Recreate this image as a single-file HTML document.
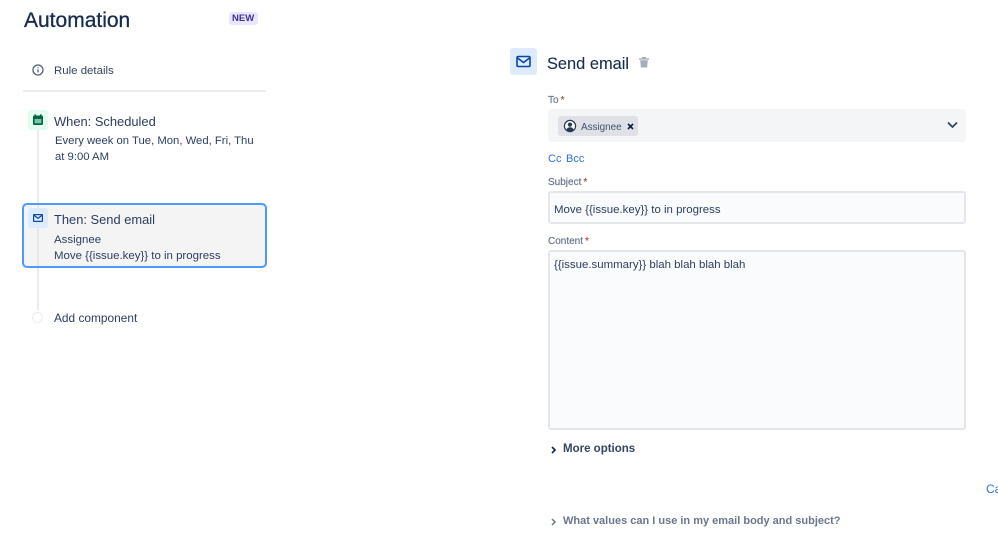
<!DOCTYPE html>
<html>
<head>
<meta charset="utf-8">
<style>
html,body{margin:0;padding:0;background:#fff}
body{width:998px;height:549px;position:relative;overflow:hidden;font-family:"Liberation Sans",sans-serif;color:#2c3e5f}
.wrap{position:absolute;left:0;top:0;width:998px;height:549px;filter:blur(.3px)}
.t{position:absolute;white-space:nowrap;line-height:16px;font-size:11.45px}
.b{position:absolute;box-sizing:border-box}
svg{position:absolute;display:block}
.req{color:#de350b;margin-left:2px}
.l{font-size:10px;color:#6b778c;-webkit-text-stroke:.2px #6b778c}
</style>
</head>
<body>
<div class="wrap">
<div class="t" style="left:24px;top:9px;line-height:24px;font-size:21px;color:#172b4d;-webkit-text-stroke:.3px #172b4d">Automation</div>
<div class="b" style="left:229px;top:12px;width:29px;height:13px;background:#eae6ff;border-radius:3px"></div>
<div class="t" style="left:232px;top:11px;font-size:9.5px;font-weight:bold;color:#403294;line-height:15px">NEW</div>

<svg style="left:31px;top:63px" width="14" height="14" viewBox="0 0 14 14" fill="none"><circle cx="7" cy="7" r="5" stroke="#505f79" stroke-width="1.3"/><path d="M7 6.4v3M7 4.2v1" stroke="#505f79" stroke-width="1.3"/></svg>
<div class="t" style="left:54px;top:63px;color:#344563;font-size:11.45px">Rule details</div>
<div class="b" style="left:23px;top:90px;width:243px;height:2px;background:#ebecf0"></div>

<div class="b" style="left:37px;top:130px;width:2px;height:180px;background:#ebecf0"></div>
<div class="b" style="left:28px;top:110px;width:20px;height:20px;background:#e3fcef;border-radius:3px"></div>
<svg style="left:32px;top:114px" width="12" height="12" viewBox="0 0 12 12"><rect x="1" y="1.5" width="10" height="9.5" rx="1.2" fill="#006644"/><rect x="2.5" y="0.3" width="1.4" height="2" fill="#006644"/><rect x="8.1" y="0.3" width="1.4" height="2" fill="#006644"/><path d="M2.6 5h6.8v4.3H2.6z" fill="#79c8a4"/></svg>
<div class="t" style="left:54px;top:114px;font-size:12.9px">When: Scheduled</div>
<div class="t" style="left:55px;top:133px;font-size:11.3px">Every week on Tue, Mon, Wed, Fri, Thu</div>
<div class="t" style="left:55px;top:149px;font-size:11.3px">at 9:00 AM</div>

<div class="b" style="left:22px;top:203px;width:245px;height:65px;background:#f4f4f4;border:2px solid #4c9aff;border-radius:5px"></div>
<div class="b" style="left:37px;top:205px;width:2px;height:61px;background:#e6e8ee"></div>
<div class="b" style="left:28px;top:208px;width:20px;height:20px;background:#deebff;border-radius:3px"></div>
<svg style="left:32px;top:212px" width="12" height="12" viewBox="0 0 12 12" fill="none"><rect x="1" y="2" width="10" height="8" rx="1" fill="#0747a6"/><rect x="2.2" y="3.2" width="7.6" height="5.6" fill="#deebff"/><path d="M2.2 3.4 6 6.4l3.8-3" stroke="#0747a6" stroke-width="1.2"/></svg>
<div class="t" style="left:54px;top:212px;font-size:12.9px">Then: Send email</div>
<div class="t" style="left:54px;top:232px">Assignee</div>
<div class="t" style="left:54px;top:248px">Move {{issue.key}} to in progress</div>

<div class="b" style="left:32px;top:312px;width:11px;height:11px;border:1.5px solid #ebecf0;border-radius:50%;background:#fff"></div>
<div class="t" style="left:54px;top:310px;font-size:11.9px">Add component</div>

<div class="b" style="left:510px;top:48px;width:27px;height:27px;background:#deebff;border-radius:3px"></div>
<svg style="left:515px;top:53px" width="17" height="17" viewBox="0 0 17 17" fill="none"><rect x="2" y="3.5" width="13" height="10" rx="1.2" stroke="#0747a6" stroke-width="1.6"/><path d="M2.5 5 8.5 9.5 14.5 5" stroke="#0747a6" stroke-width="1.6"/></svg>
<div class="t" style="left:547px;top:53px;font-size:16.4px;line-height:22px;color:#172b4d;-webkit-text-stroke:.1px #172b4d">Send email</div>
<svg style="left:638px;top:56px" width="12" height="13" viewBox="0 0 12 13"><path d="M1 2.3h10v1.3H1zM4 1h4v1.5H4zM2.2 4.2h7.6l-.7 7.3H2.9z" fill="#a5adba"/></svg>

<div class="t l" style="left:548px;top:93px">To<span class="req">*</span></div>
<div class="b" style="left:548px;top:109px;width:418px;height:33px;background:#f4f5f7;border-radius:3px"></div>
<div class="b" style="left:558px;top:116px;width:80px;height:20px;background:#dfe1e6;border-radius:3px"></div>
<svg style="left:563px;top:119px" width="14" height="14" viewBox="0 0 14 14" fill="none"><circle cx="7" cy="7" r="5.6" stroke="#253858" stroke-width="1.2" fill="#fff"/><circle cx="7" cy="5.6" r="2.1" fill="#253858"/><path d="M3.4 10.8c.6-2 2-2.6 3.6-2.6s3 .6 3.6 2.6a5 5 0 0 1-7.2 0z" fill="#253858"/></svg>
<div class="t" style="left:581px;top:120px;font-size:9.9px;line-height:15px;color:#42526e">Assignee</div>
<svg style="left:627px;top:123px" width="7" height="7" viewBox="0 0 7 7"><path d="M1 1l5 5M6 1 1 6" stroke="#091e42" stroke-width="1.6"/></svg>
<svg style="left:946px;top:120px" width="13" height="10" viewBox="0 0 13 10" fill="none"><path d="M2 2.5 6.5 7 11 2.5" stroke="#344563" stroke-width="1.8"/></svg>
<div class="t" style="left:548px;top:151px;font-size:11px;color:#2f6fe0">Cc</div>
<div class="t" style="left:566px;top:151px;font-size:11px;color:#2f6fe0">Bcc</div>

<div class="t l" style="left:548px;top:175px">Subject<span class="req">*</span></div>
<div class="b" style="left:548px;top:191px;width:418px;height:33px;background:#fafbfc;border:2px solid #e4e6ea;border-radius:3px"></div>
<div class="t" style="left:554px;top:202px">Move {{issue.key}} to in progress</div>

<div class="t l" style="left:548px;top:234px">Content<span class="req">*</span></div>
<div class="b" style="left:548px;top:250px;width:418px;height:180px;background:#fafbfc;border:2px solid #e4e6ea;border-radius:3px"></div>
<div class="t" style="left:554px;top:257px;font-size:11.45px">{{issue.summary}} blah blah blah blah</div>

<svg style="left:550px;top:445px" width="8" height="10" viewBox="0 0 8 10" fill="none"><path d="M2 2 5 5 2 8" stroke="#172b4d" stroke-width="1.7"/></svg>
<div class="t" style="left:563px;top:441px;font-size:11.5px;font-weight:bold;color:#344563">More options</div>

<div class="t" style="left:986px;top:481px;font-size:12px;color:#2f6fe0">Cancel</div>

<svg style="left:550px;top:517px" width="8" height="10" viewBox="0 0 8 10" fill="none"><path d="M2 2 5 5 2 8" stroke="#6b778c" stroke-width="1.5"/></svg>
<div class="t" style="left:563px;top:513px;font-size:11px;font-weight:bold;color:#6b778c">What values can I use in my email body and subject?</div>
</div>
</body>
</html>
